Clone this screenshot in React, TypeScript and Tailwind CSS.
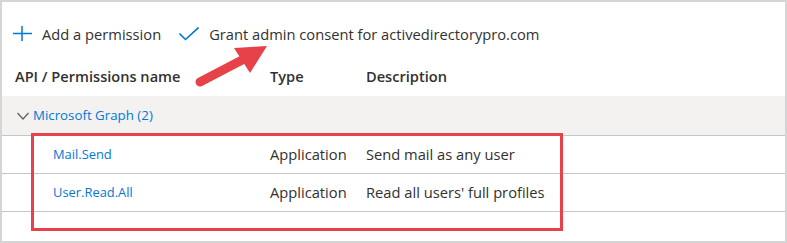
import React from 'react';

const rows = [
  { name: 'Mail.Send', type: 'Application', desc: 'Send mail as any user' },
  { name: 'User.Read.All', type: 'Application', desc: "Read all users' full profiles" },
];

const PlusIcon = () => (
  <svg width="20" height="20" viewBox="0 0 20 20" fill="none" stroke="#0078d4" strokeWidth="1.5">
    <path d="M10 2v15M1 9.5h19" />
  </svg>
);

const CheckIcon = () => (
  <svg width="20" height="14" viewBox="0 0 20 14" fill="none" stroke="#0078d4" strokeWidth="1.6">
    <path d="M0.5 6.5l6 6L19.5 0.5" />
  </svg>
);

const Chevron = () => (
  <svg width="12" height="8" viewBox="0 0 12 8" fill="none" stroke="#605e5c" strokeWidth="1.2">
    <path d="M0.5 1l5.5 6 5.5-6" />
  </svg>
);

export default function App() {
  return (
    <div className="relative w-[787px] h-[243px] bg-white border-2 border-[#d5d5d5] text-[#323130] font-['Open_Sans','Segoe_UI',sans-serif] overflow-hidden">
      <div className="flex items-center h-[28px] mt-[18px] pl-[10px] text-[14.7px]">
        <PlusIcon />
        <span className="ml-[10px]">Add a permission</span>
        <span className="ml-[18px]">
          <CheckIcon />
        </span>
        <span className="ml-[10px]">Grant admin consent for activedirectorypro.com</span>
      </div>

      <div className="grid grid-cols-[268px_96px_1fr] items-center h-[38px] mt-[10px] text-[14.6px] font-semibold">
        <span className="pl-[13px]">API / Permissions name</span>
        <span>Type</span>
        <span>Description</span>
      </div>

      <div className="flex items-center h-[40px] bg-[#f3f2f1] border-b border-[#c8c6c4] pl-[15px] text-[13.3px] text-[#0078d4]">
        <Chevron />
        <span className="ml-[4px]">Microsoft Graph (2)</span>
      </div>

      {rows.map((r) => (
        <div
          key={r.name}
          className="grid grid-cols-[268px_96px_1fr] items-center h-[38px] border-b border-[#c8c6c4]">
          <span className="pl-[51px] text-[12.9px] text-[#0078d4]">{r.name}</span>
          <span className="text-[14.7px]">{r.type}</span>
          <span className="text-[14.7px]">{r.desc}</span>
        </div>
      ))}

      <div className="absolute left-[29px] top-[131px] w-[532px] h-[98px] border-[3px] border-[#e74249]" />

      <svg className="absolute left-[-2px] top-[-2px]" width="787" height="243" viewBox="0 0 787 243">
        <path d="M200 82L244 59" stroke="#e74249" strokeWidth="9" strokeLinecap="round" />
        <polygon points="234,48 267,46 250,73" fill="#e74249" />
      </svg>
    </div>
  );
}
